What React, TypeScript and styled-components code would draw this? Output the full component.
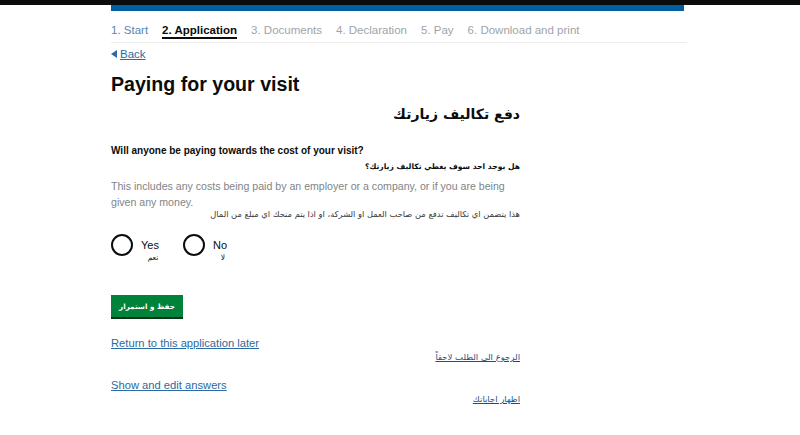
import * as React from 'react'
import styled, { createGlobalStyle } from 'styled-components'

const GlobalStyle = createGlobalStyle`
  html, body {
    margin: 0;
    padding: 0;
    background: #ffffff;
  }
  body {
    font-family: "Liberation Sans", Arial, sans-serif;
    color: #0b0c0c;
  }
`

const TopStrip = styled.div`
  height: 5px;
  background: #0b0c0c;
`

const Page = styled.div`
  width: 576px;
  margin-left: 111px;
`

const BlueBar = styled.div`
  height: 6px;
  width: 573px;
  background: #005ea5;
`

const StepNav = styled.nav`
  display: flex;
  gap: 14px;
  padding-top: 12px;
  border-bottom: 1px solid #eeeeee;
  height: 19px;
  box-sizing: content-box;
`

const Step = styled.span<{ state: 'done' | 'current' | 'todo' }>`
  font-size: 11.5px;
  line-height: 14px;
  height: 16px;
  box-sizing: border-box;
  font-weight: ${({ state }) => (state === 'current' ? 700 : 400)};
  color: ${({ state }) =>
    state === 'current' ? '#0b0c0c' : state === 'done' ? '#5b84b1' : '#a0a4a6'};
  border-bottom: ${({ state }) =>
    state === 'current' ? '2px solid #0b0c0c' : '2px solid transparent'};
`

const BackLink = styled.a`
  display: inline-flex;
  align-items: center;
  gap: 3px;
  margin-top: 4px;
  font-size: 11.5px;
  line-height: 14px;
  color: #2b6aa3;
  text-decoration: underline;
  &::before {
    content: '';
    width: 0;
    height: 0;
    border-top: 4px solid transparent;
    border-bottom: 4px solid transparent;
    border-right: 6px solid #2b6aa3;
  }
`

const Form = styled.div`
  width: 409px;
`

const Heading = styled.h1`
  margin: 10px 0 0;
  font-size: 19.6px;
  line-height: 24px;
  font-weight: 700;
`

const Arabic = styled.div<{ size: number; lh: number; bold?: boolean; color?: string }>`
  direction: rtl;
  text-align: right;
  font-family: "DejaVu Sans", "Liberation Sans", sans-serif;
  font-size: ${({ size }) => size}px;
  line-height: ${({ lh }) => lh}px;
  font-weight: ${({ bold }) => (bold ? 700 : 400)};
  color: ${({ color }) => color || '#0b0c0c'};
`

const ArabicHeading = styled(Arabic)`
  margin-top: 7px;
`

const ArabicQuestion = styled(Arabic)`
  margin-top: 4px;
`

const ArabicHint = styled(Arabic)`
  margin-top: -1px;
`

const Question = styled.div`
  margin-top: 19px;
  font-size: 10px;
  line-height: 13px;
  font-weight: 700;
`

const Hint = styled.div`
  margin-top: 5px;
  font-size: 10.6px;
  line-height: 16px;
  color: #7f8487;
`

const Radios = styled.div`
  display: flex;
  gap: 24px;
  margin-top: 15px;
`

const RadioItem = styled.label`
  display: flex;
  align-items: flex-start;
  gap: 8px;
`

const Circle = styled.span`
  width: 22px;
  height: 22px;
  box-sizing: border-box;
  border: 2px solid #0b0c0c;
  border-radius: 50%;
  flex: none;
`

const RadioText = styled.div`
  display: flex;
  flex-direction: column;
  align-items: center;
  padding-top: 4px;
  font-size: 11px;
  line-height: 14px;
`

const SmallArabic = styled.span`
  font-family: "DejaVu Sans", sans-serif;
  font-size: 7.5px;
  line-height: 12px;
  padding-left: 6px;
`

const SaveButton = styled.button`
  display: flex;
  align-items: center;
  justify-content: center;
  margin-top: 31px;
  width: 72px;
  height: 24px;
  border: none;
  border-bottom: 2px solid #003618;
  background: #00823b;
  color: #ffffff;
  font-family: "DejaVu Sans", sans-serif;
  font-size: 7.2px;
  font-weight: 700;
  padding: 0;
`

const LinkGroup = styled.div<{ first?: boolean }>`
  margin-top: ${({ first }) => (first ? '17px' : '15px')};
`

const EnLink = styled.a`
  display: block;
  font-size: 11.2px;
  line-height: 14px;
  color: #2b6aa3;
  text-decoration: underline;
`

const ArLink = styled.a`
  display: block;
  direction: rtl;
  text-align: right;
  margin-top: 1px;
  font-family: "DejaVu Sans", sans-serif;
  font-size: 8.5px;
  line-height: 12px;
  color: #1d4f86;
  text-decoration: underline;
`

const steps: { label: string; state: 'done' | 'current' | 'todo' }[] = [
  { label: '1. Start', state: 'done' },
  { label: '2. Application', state: 'current' },
  { label: '3. Documents', state: 'todo' },
  { label: '4. Declaration', state: 'todo' },
  { label: '5. Pay', state: 'todo' },
  { label: '6. Download and print', state: 'todo' },
]

export default function App() {
  return (
    <>
      <GlobalStyle />
      <TopStrip />
      <Page>
        <BlueBar />
        <StepNav>
          {steps.map((s) => (
            <Step key={s.label} state={s.state}>
              {s.label}
            </Step>
          ))}
        </StepNav>
        <BackLink href="#">Back</BackLink>
        <Form>
          <Heading>Paying for your visit</Heading>
          <ArabicHeading size={14} lh={22} bold>
            دفع تكاليف زيارتك
          </ArabicHeading>
          <Question>Will anyone be paying towards the cost of your visit?</Question>
          <ArabicQuestion size={7.6} lh={12} bold>
            هل يوجد احد سوف يغطي تكاليف زيارتك؟
          </ArabicQuestion>
          <Hint>
            This includes any costs being paid by an employer or a company, or if you are being
            given any money.
          </Hint>
          <ArabicHint size={8.3} lh={10} color="#3a3a3a">
            هذا يتضمن اي تكاليف تدفع من صاحب العمل او الشركة، او اذا يتم منحك اي مبلغ من المال
          </ArabicHint>
          <Radios>
            <RadioItem>
              <Circle />
              <RadioText>
                Yes
                <SmallArabic>نعم</SmallArabic>
              </RadioText>
            </RadioItem>
            <RadioItem>
              <Circle />
              <RadioText>
                No
                <SmallArabic>لا</SmallArabic>
              </RadioText>
            </RadioItem>
          </Radios>
          <SaveButton>حفظ و استمرار</SaveButton>
          <LinkGroup first>
            <EnLink href="#">Return to this application later</EnLink>
            <ArLink href="#">الرجوع الى الطلب لاحقاً</ArLink>
          </LinkGroup>
          <LinkGroup>
            <EnLink href="#">Show and edit answers</EnLink>
            <ArLink href="#">اظهار اجاباتك</ArLink>
          </LinkGroup>
        </Form>
      </Page>
    </>
  )
}
